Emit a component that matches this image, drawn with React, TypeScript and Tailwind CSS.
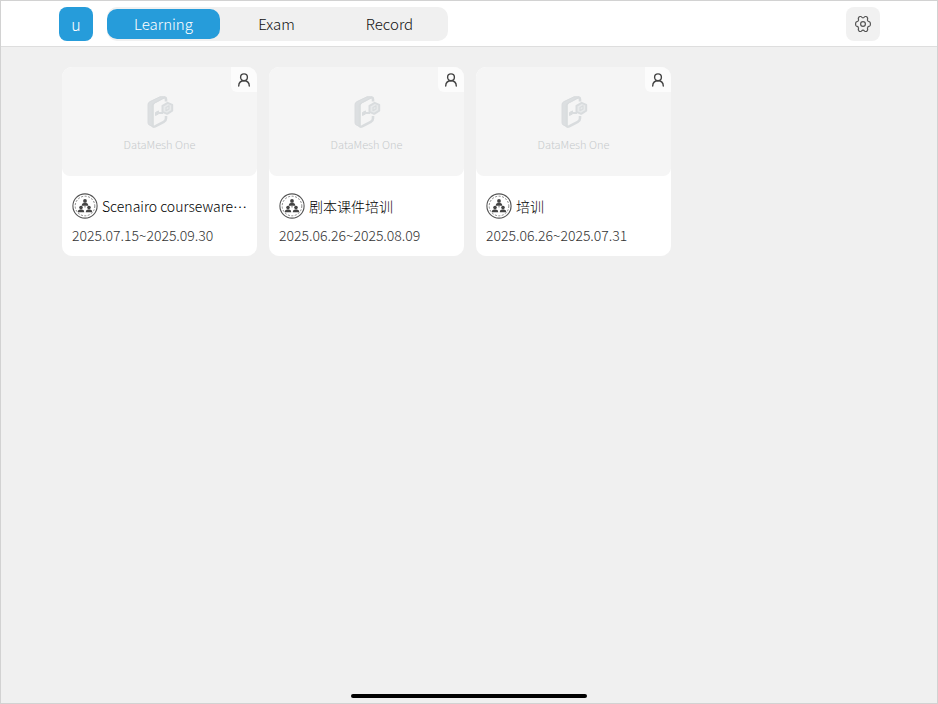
import { useState } from 'react';
import { clsx } from 'clsx';

const tabs = ['Learning', 'Exam', 'Record'];

const courses = [
  { id: 1, title: 'Scenairo courseware…', period: '2025.07.15~2025.09.30' },
  { id: 2, title: '剧本课件培训', period: '2025.06.26~2025.08.09' },
  { id: 3, title: '培训', period: '2025.06.26~2025.07.31' },
];

function SettingsIcon() {
  return (
    <svg viewBox="0 0 18 18" className="size-[18px]" fill="none" stroke="#555" strokeWidth="1.2" strokeLinejoin="round">
      <path d="M5.9 1.5h.9q.5 0 .8.5.5.8 1.4.8t1.4-.8q.3-.5.8-.5h.9q.5 0 .8.4l.7 1.2q.2.4 0 .9-.4 1 .1 1.8.4.8 1.4.9.6 0 .9.5l.3.9q.3.9 0 1.8l-.3.9q-.3.5-.9.5-1 .1-1.4.9-.5.8-.1 1.8.2.5 0 .9l-.7 1.2q-.3.4-.8.4h-.9q-.5 0-.8-.5-.5-.8-1.4-.8t-1.4.8q-.3.5-.8.5h-.9q-.5 0-.8-.4l-.7-1.2q-.2-.4 0-.9.4-1-.1-1.8-.4-.8-1.4-.9-.6 0-.9-.5l-.3-.9q-.3-.9 0-1.8l.3-.9q.3-.5.9-.5 1-.1 1.4-.9.5-.8.1-1.8-.2-.5 0-.9l.7-1.2q.3-.4.8-.4Z" />
      <circle cx="9" cy="9" r="2.4" />
    </svg>
  );
}

function UserIcon() {
  return (
    <svg viewBox="0 0 14 14" className="size-[14px]" fill="none" stroke="#444" strokeWidth="1.4" strokeLinecap="round">
      <circle cx="7" cy="4.3" r="3.4" />
      <path d="M1.7 13c.1-3 2.1-5.2 5.3-5.2s5.2 2.2 5.3 5.2" />
    </svg>
  );
}

function BrandMark() {
  return (
    <svg viewBox="0 0 28 36" className="h-9 w-7" fill="none" stroke="#d9dcde" strokeLinejoin="round">
      <path d="M20 7.5V5.4q0-2.8-3.2-1.6L8.6 8Q6.5 9 6.5 11.5v19.3q0 2.6 2.6 1.6l8.7-4.6q2.2-1.2 2.2-3.6V22" strokeWidth="2.6" />
      <path d="M2 10.5Q2 8.6 4 7.6l10.4-5 4.6.6L7 9.8l-.8 2.7v19.8L3.2 31Q2 30 2 28.4Z" fill="#dcdfe1" strokeWidth="1" />
      <path d="M9.5 21.5v-3l3-1.6v3Z" fill="#d9dcde" strokeWidth="1" />
      <path d="M12.5 19h4.5" strokeWidth="2.2" />
      <path d="m16.5 11.8 5.2-3 4.5 2v5.8l-5 3.2-4.7-2Z" fill="#e8eaeb" strokeWidth="2" />
      <path d="m20 13.4 3-1.7v3.2l-3 1.8Z" strokeWidth="1.2" />
    </svg>
  );
}

function TeamBadge() {
  return (
    <svg viewBox="0 0 26 26" className="size-[26px] shrink-0">
      <circle cx="13" cy="13" r="12.1" fill="none" stroke="#555" strokeWidth="1.1" />
      <circle cx="13" cy="13" r="9.8" fill="none" stroke="#888" strokeWidth="1" strokeDasharray="2 1.5" />
      <g fill="#444">
        <circle cx="13" cy="7.9" r="1.9" />
        <path d="M9.6 12.8q0-2.7 2.4-3h2q2.4.3 2.4 3Z" />
        <circle cx="9" cy="14.6" r="1.8" />
        <path d="M5.7 19.2q0-2.6 2.3-2.8h2q2.3.2 2.3 2.8Z" />
        <circle cx="17" cy="14.6" r="1.8" />
        <path d="M13.7 19.2q0-2.6 2.3-2.8h2q2.3.2 2.3 2.8Z" />
      </g>
      <path d="M13 12.5v2" stroke="#777" strokeWidth="1" />
    </svg>
  );
}

function CourseCard({ title, period }: { title: string; period: string }) {
  return (
    <article className="overflow-hidden rounded-[10px] bg-white">
      <div className="relative flex h-[109px] flex-col items-center rounded-lg bg-[#f5f5f5] pt-[27px]">
        <BrandMark />
        <span className="mt-1 text-[11px] leading-5 text-[#c6cacc]">DataMesh One</span>
        <span className="absolute top-0 right-0 flex h-[25px] w-[26px] items-center justify-center rounded-bl-md bg-[#fcfcfc]">
          <UserIcon />
        </span>
      </div>
      <div className="px-[10px] pt-[17px] pb-[9px]">
        <div className="flex items-center gap-1">
          <TeamBadge />
          <h2 lang="zh-CN" className="text-sm leading-6 whitespace-nowrap text-black">
            {title}
          </h2>
        </div>
        <p className="mt-1 text-sm leading-6 text-[#333]">{period}</p>
      </div>
    </article>
  );
}

export default function App() {
  const [active, setActive] = useState('Learning');

  return (
    <div className="flex min-h-screen flex-col border border-[#d2d2d2] bg-[#f0f0f0] font-['Noto_Sans_CJK_SC',sans-serif] font-light">
      <header className="flex items-center border-b border-[#dedede] bg-white pt-[6px] pr-[57px] pb-[5px] pl-[58px]">
        <button type="button" className="size-[34px] rounded-lg bg-[#269cda] text-base text-white">
          u
        </button>
        <nav className="ml-[14px] flex rounded-[10px] bg-[#f0f0f0] py-[2px] pr-[2px]">
          {tabs.map((tab) => (
            <button
              key={tab}
              type="button"
              onClick={() => setActive(tab)}
              className={clsx(
                'h-[30px] w-[113px] rounded-[10px] text-[15px]',
                active === tab ? 'bg-[#269cda] text-white' : 'text-[#111]',
              )}
            >
              {tab}
            </button>
          ))}
        </nav>
        <button
          type="button"
          aria-label="Settings"
          className="ml-auto flex size-[34px] items-center justify-center rounded-lg bg-[#f1f1f1]"
        >
          <SettingsIcon />
        </button>
      </header>
      <main className="grid flex-1 grid-cols-[repeat(auto-fill,195px)] content-start gap-3 px-[61px] pt-5">
        {courses.map((course) => (
          <CourseCard key={course.id} title={course.title} period={course.period} />
        ))}
      </main>
      <div className="mx-auto mb-[5px] h-1 w-[236px] rounded-full bg-black" />
    </div>
  );
}
